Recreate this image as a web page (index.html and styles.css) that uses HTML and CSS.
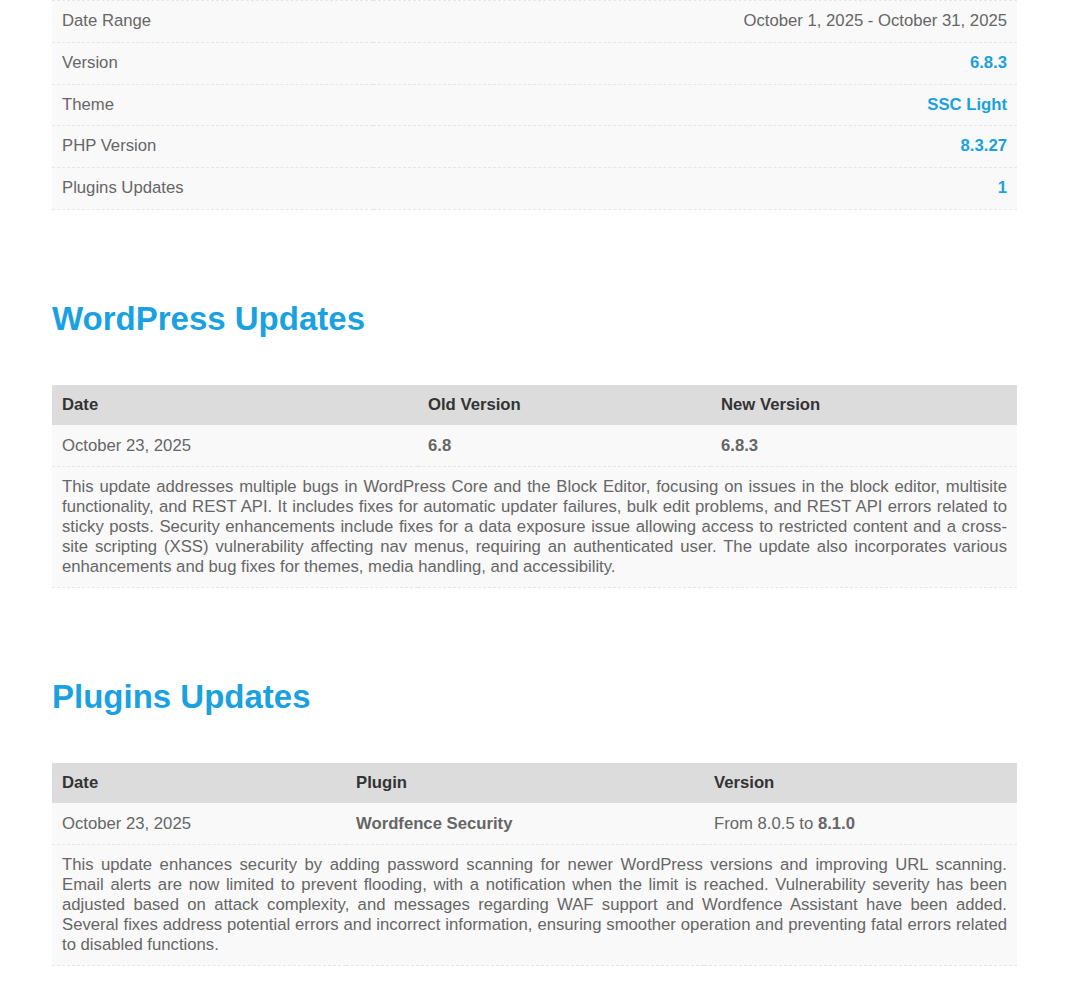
FILE: index.html
```html
<!DOCTYPE html>
<html lang="en">
<head>
    <meta charset="UTF-8">
    <title>Maintenance Report</title>
    <link rel="stylesheet" href="styles.css">
</head>
<body>
    <div class="report">
        <table class="summary">
            <tr><td>Date Range</td><td class="val">October 1, 2025 - October 31, 2025</td></tr>
            <tr><td>Version</td><td class="val hl">6.8.3</td></tr>
            <tr><td>Theme</td><td class="val hl">SSC Light</td></tr>
            <tr><td>PHP Version</td><td class="val hl">8.3.27</td></tr>
            <tr><td>Plugins Updates</td><td class="val hl">1</td></tr>
        </table>

        <h2>WordPress Updates</h2>

        <table class="updates wp">
            <thead>
                <tr><th>Date</th><th>Old Version</th><th>New Version</th></tr>
            </thead>
            <tbody>
                <tr>
                    <td>October 23, 2025</td>
                    <td><b>6.8</b></td>
                    <td><b>6.8.3</b></td>
                </tr>
                <tr>
                    <td colspan="3" class="desc">This update addresses multiple bugs in WordPress Core and the Block Editor, focusing on issues in the block editor, multisite functionality, and REST API. It includes fixes for automatic updater failures, bulk edit problems, and REST API errors related to sticky posts. Security enhancements include fixes for a data exposure issue allowing access to restricted content and a cross-site scripting (XSS) vulnerability affecting nav menus, requiring an authenticated user. The update also incorporates various enhancements and bug fixes for themes, media handling, and accessibility.</td>
                </tr>
            </tbody>
        </table>

        <h2>Plugins Updates</h2>

        <table class="updates plugins">
            <thead>
                <tr><th>Date</th><th>Plugin</th><th>Version</th></tr>
            </thead>
            <tbody>
                <tr>
                    <td>October 23, 2025</td>
                    <td><b>Wordfence Security</b></td>
                    <td>From 8.0.5 to <b>8.1.0</b></td>
                </tr>
                <tr>
                    <td colspan="3" class="desc">This update enhances security by adding password scanning for newer WordPress versions and improving URL scanning. Email alerts are now limited to prevent flooding, with a notification when the limit is reached. Vulnerability severity has been adjusted based on attack complexity, and messages regarding WAF support and Wordfence Assistant have been added. Several fixes address potential errors and incorrect information, ensuring smoother operation and preventing fatal errors related to disabled functions.</td>
                </tr>
            </tbody>
        </table>
    </div>
</body>
</html>
```

FILE: styles.css
```css
body {
    margin: 0;
    font-family: "Liberation Sans", Arial, sans-serif;
    font-size: 16.7px;
    color: #666;
    background-color: #fff;
}

.report {
    width: 965px;
    margin: 0 0 0 52px;
    padding-bottom: 40px;
}

table {
    width: 100%;
    border-collapse: collapse;
}

td, th {
    padding: 10px;
    line-height: 21px;
    text-align: left;
    vertical-align: top;
}

td {
    background-color: #f9f9f9;
    border-bottom: 1px dashed #e6e6e6;
}

.summary {
    border-top: 1px dashed #e6e6e6;
}

.summary td {
    line-height: 20.8px;
}

.summary .val {
    text-align: right;
}

.hl {
    color: #1aa1e0;
    font-weight: bold;
}

h2 {
    color: #1aa1e0;
    font-size: 33px;
    line-height: 40px;
    margin: 89px 0 46px 0;
}

th {
    background-color: #dcdcdc;
    color: #333;
    font-weight: bold;
    padding: 9px 10px 10px;
}

.desc {
    text-align: justify;
    line-height: 20px;
    padding: 10px 10px 10px;
}

.wp th:nth-child(1) { width: 346px; }
.wp th:nth-child(2) { width: 273px; }

.plugins th:nth-child(1) { width: 274px; }
.plugins th:nth-child(2) { width: 338px; }
```
